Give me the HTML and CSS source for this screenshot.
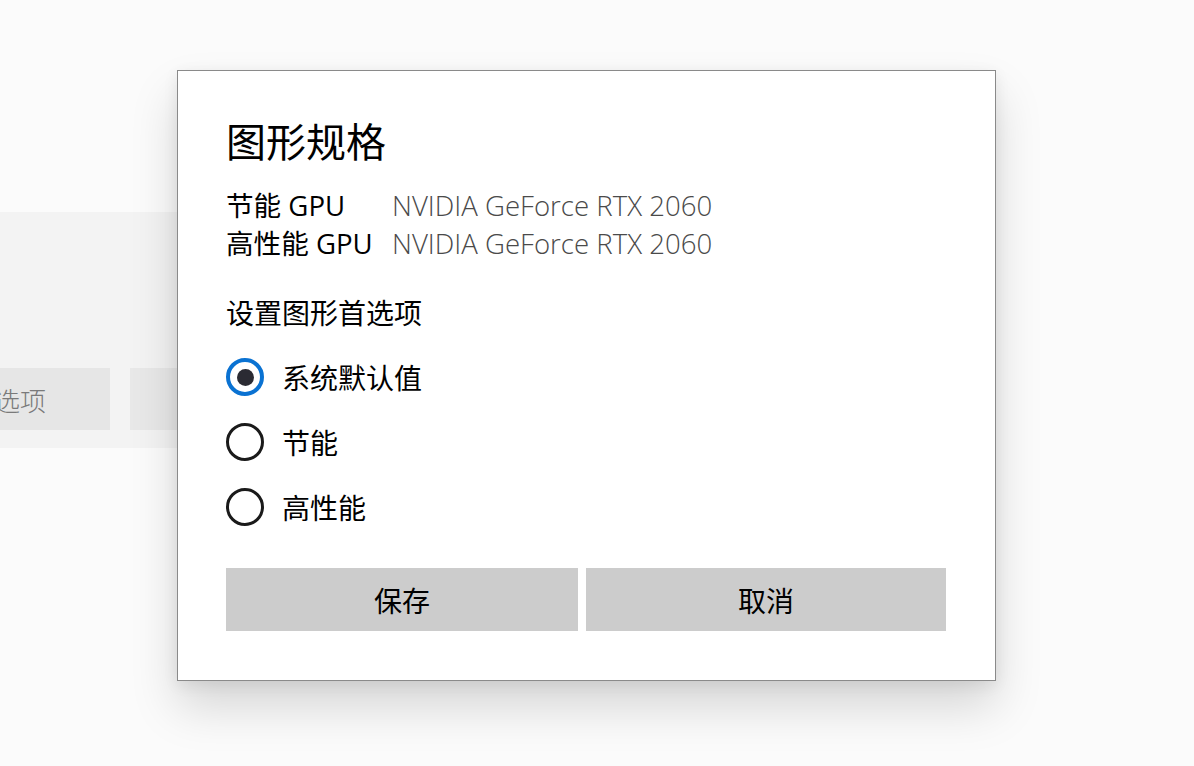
FILE: index.html
```html
<!DOCTYPE html>
<html lang="zh-CN">
<head>
<meta charset="utf-8">
<title>图形规格</title>
<link rel="stylesheet" href="styles.css">
</head>
<body>
<div class="page">
  <div class="band">
    <div class="bg-btn bg-btn-first"><span class="bg-btn-text">选项</span></div>
    <div class="bg-btn bg-btn-second"></div>
  </div>
</div>

<div class="dialog" role="dialog">
  <h1 class="title">图形规格</h1>
  <div class="specs">
    <div class="spec-label">节能 GPU</div>
    <div class="spec-value">NVIDIA GeForce RTX 2060</div>
    <div class="spec-label">高性能 GPU</div>
    <div class="spec-value">NVIDIA GeForce RTX 2060</div>
  </div>
  <div class="section">设置图形首选项</div>
  <div class="radios">
    <div class="radio-row">
      <span class="radio radio-checked"><span class="radio-dot"></span></span>
      <span class="radio-label">系统默认值</span>
    </div>
    <div class="radio-row">
      <span class="radio"></span>
      <span class="radio-label">节能</span>
    </div>
    <div class="radio-row">
      <span class="radio"></span>
      <span class="radio-label">高性能</span>
    </div>
  </div>
  <div class="actions">
    <button class="btn">保存</button>
    <button class="btn">取消</button>
  </div>
</div>
</body>
</html>
```

FILE: styles.css
```css
* { box-sizing: border-box; }

html, body {
  margin: 0;
  padding: 0;
  width: 1194px;
  height: 766px;
  overflow: hidden;
  background: #fbfbfb;
  font-family: "Open Sans", "Noto Sans CJK SC", sans-serif;
  color: #000;
}

.page {
  padding-top: 212px;
}

.band {
  width: 640px;
  height: 236px;
  background: #f3f3f3;
  padding-top: 156px;
  display: flex;
  gap: 20px;
}

.bg-btn {
  height: 62px;
  background: #e6e6e6;
  display: flex;
  align-items: center;
  overflow: hidden;
}

.bg-btn-first {
  width: 110px;
}

.bg-btn-text {
  margin-left: -6px;
  font-size: 26px;
  color: #7a7a7a;
  font-family: "Noto Sans CJK SC", sans-serif;
  font-weight: 300;
}

.bg-btn-second {
  width: 200px;
  background: #e8e8e8;
}

.dialog {
  position: absolute;
  left: 177px;
  top: 70px;
  width: 819px;
  height: 611px;
  background: #ffffff;
  border: 1px solid #8a8a8a;
  box-shadow: 0 26px 44px rgba(0, 0, 0, 0.15), 0 4px 14px rgba(0, 0, 0, 0.08);
  padding: 43px 49px 0 48px;
  display: flex;
  flex-direction: column;
}

.title {
  margin: 0;
  font-size: 40px;
  line-height: 52px;
  font-weight: 400;
  font-family: "Noto Sans CJK SC", sans-serif;
}

.specs {
  margin-top: 20px;
  display: grid;
  grid-template-columns: 166px auto;
  font-size: 27.6px;
  line-height: 38px;
}

.spec-label {
  color: #000;
}

.spec-value {
  color: #4a4a4a;
  font-weight: 300;
}

.section {
  margin-top: 31px;
  font-size: 28px;
  line-height: 38px;
  font-family: "Noto Sans CJK SC", sans-serif;
}

.radios {
  margin-top: 26px;
  display: flex;
  flex-direction: column;
  gap: 25px;
}

.radio-row {
  display: flex;
  align-items: center;
  height: 40px;
  gap: 18px;
}

.radio {
  width: 38px;
  height: 38px;
  border-radius: 50%;
  border: 3px solid #1a1a1a;
  display: flex;
  align-items: center;
  justify-content: center;
  flex: none;
}

.radio-checked {
  border: 4px solid #0a72d2;
}

.radio-dot {
  width: 17px;
  height: 17px;
  border-radius: 50%;
  background: #2b2b33;
}

.radio-label {
  font-size: 28px;
  line-height: 40px;
  font-family: "Noto Sans CJK SC", sans-serif;
}

.actions {
  margin-top: 41px;
  display: grid;
  grid-template-columns: 352px 1fr;
  gap: 8px;
}

.btn {
  height: 63px;
  border: none;
  border-radius: 0;
  background: #cccccc;
  color: #000;
  font-size: 28px;
  font-family: "Noto Sans CJK SC", sans-serif;
  padding: 0;
}
```
